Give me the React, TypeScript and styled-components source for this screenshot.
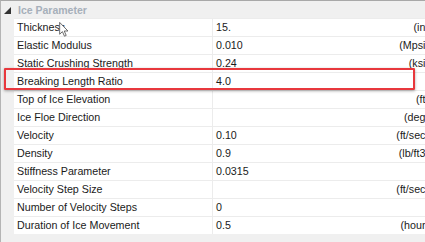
import * as React from "react";
import styled, { createGlobalStyle } from "styled-components";

const GlobalStyle = createGlobalStyle`
  html, body {
    margin: 0;
    padding: 0;
    background: #ffffff;
  }
  body {
    font-family: "Liberation Sans", Arial, sans-serif;
  }
`;

interface Param {
  label: string;
  value: string;
  unit: string;
}

const params: Param[] = [
  { label: "Thickness", value: "15.", unit: "(in)" },
  { label: "Elastic Modulus", value: "0.010", unit: "(Mpsi)" },
  { label: "Static Crushing Strength", value: "0.24", unit: "(ksi)" },
  { label: "Breaking Length Ratio", value: "4.0", unit: "" },
  { label: "Top of Ice Elevation", value: "", unit: "(ft)" },
  { label: "Ice Floe Direction", value: "", unit: "(deg)" },
  { label: "Velocity", value: "0.10", unit: "(ft/sec)" },
  { label: "Density", value: "0.9", unit: "(lb/ft3)" },
  { label: "Stiffness Parameter", value: "0.0315", unit: "" },
  { label: "Velocity Step Size", value: "", unit: "(ft/sec)" },
  { label: "Number of Velocity Steps", value: "0", unit: "" },
  { label: "Duration of Ice Movement", value: "0.5", unit: "(hour)" },
];

const App = () => {
  return (
    <Screen>
      <GlobalStyle />
      <Panel>
        <Header>
          <Toggle>
            <svg width="7" height="7" viewBox="0 0 7 7">
              <polygon points="7,0 7,7 0,7" fill="#333333" />
            </svg>
          </Toggle>
          <Title>Ice Parameter</Title>
        </Header>
        <List>
          {params.map((p) => (
            <Row key={p.label}>
              <Label>{p.label}</Label>
              <ValueCell>
                <Value>{p.value}</Value>
                <Unit>{p.unit}</Unit>
              </ValueCell>
            </Row>
          ))}
        </List>
      </Panel>
      <Highlight />
      {/* mouse pointer caught in the screenshot */}
      <Cursor width="10" height="15" viewBox="0 0 12 19">
        <path
          d="M0.5 0.5 L0.5 15.5 L4 12.2 L6.6 18 L8.8 17 L6.3 11.4 L11 11.4 Z"
          fill="#ffffff"
          stroke="#555555"
          strokeWidth="1.1"
          strokeLinejoin="round"
        />
      </Cursor>
    </Screen>
  );
};

const Screen = styled.div`
  position: relative;
  width: 425px;
  height: 242px;
  overflow: hidden;
  background: #ffffff;
`;

const Panel = styled.div`
  width: 440px;
  height: 242px;
  background: #f0f0f0;
  border-top: 1px solid #a8a8a8;
  border-left: 1px solid #b4b4b4;
  box-sizing: border-box;
  display: flex;
  flex-direction: column;
`;

const Header = styled.div`
  height: 17px;
  display: flex;
  align-items: center;
`;

const Toggle = styled.div`
  width: 13px;
  display: flex;
  justify-content: center;
  padding-top: 1px;
`;

const Title = styled.span`
  margin-left: 4px;
  font-size: 10.5px;
  font-weight: 700;
  color: #a6afba;
`;

const List = styled.div`
  margin-left: 13px;
  background: #ffffff;
  display: flex;
  flex-direction: column;
`;

const Row = styled.div`
  height: 18px;
  display: grid;
  grid-template-columns: 199px 1fr;
  border-top: 1px solid #ececec;
  box-sizing: border-box;
`;

const Label = styled.div`
  padding-left: 3px;
  font-size: 10.7px;
  line-height: 17px;
  color: #1a1a1a;
  white-space: nowrap;
  border-right: 1px solid #ececec;
`;

const ValueCell = styled.div`
  display: flex;
  justify-content: space-between;
  padding: 0 11px 0 3px;
  font-size: 10.7px;
  line-height: 17px;
  color: #1a1a1a;
  white-space: nowrap;
`;

const Value = styled.span``;

const Unit = styled.span``;

const Highlight = styled.div`
  position: absolute;
  left: 4px;
  top: 68px;
  width: 411px;
  height: 22px;
  box-sizing: border-box;
  border: 2px solid #e8383d;
  border-radius: 1px;
  box-shadow: 0 1px 3px rgba(0, 0, 0, 0.35);
`;

const Cursor = styled.svg`
  position: absolute;
  left: 59px;
  top: 22px;
`;

export default App;
